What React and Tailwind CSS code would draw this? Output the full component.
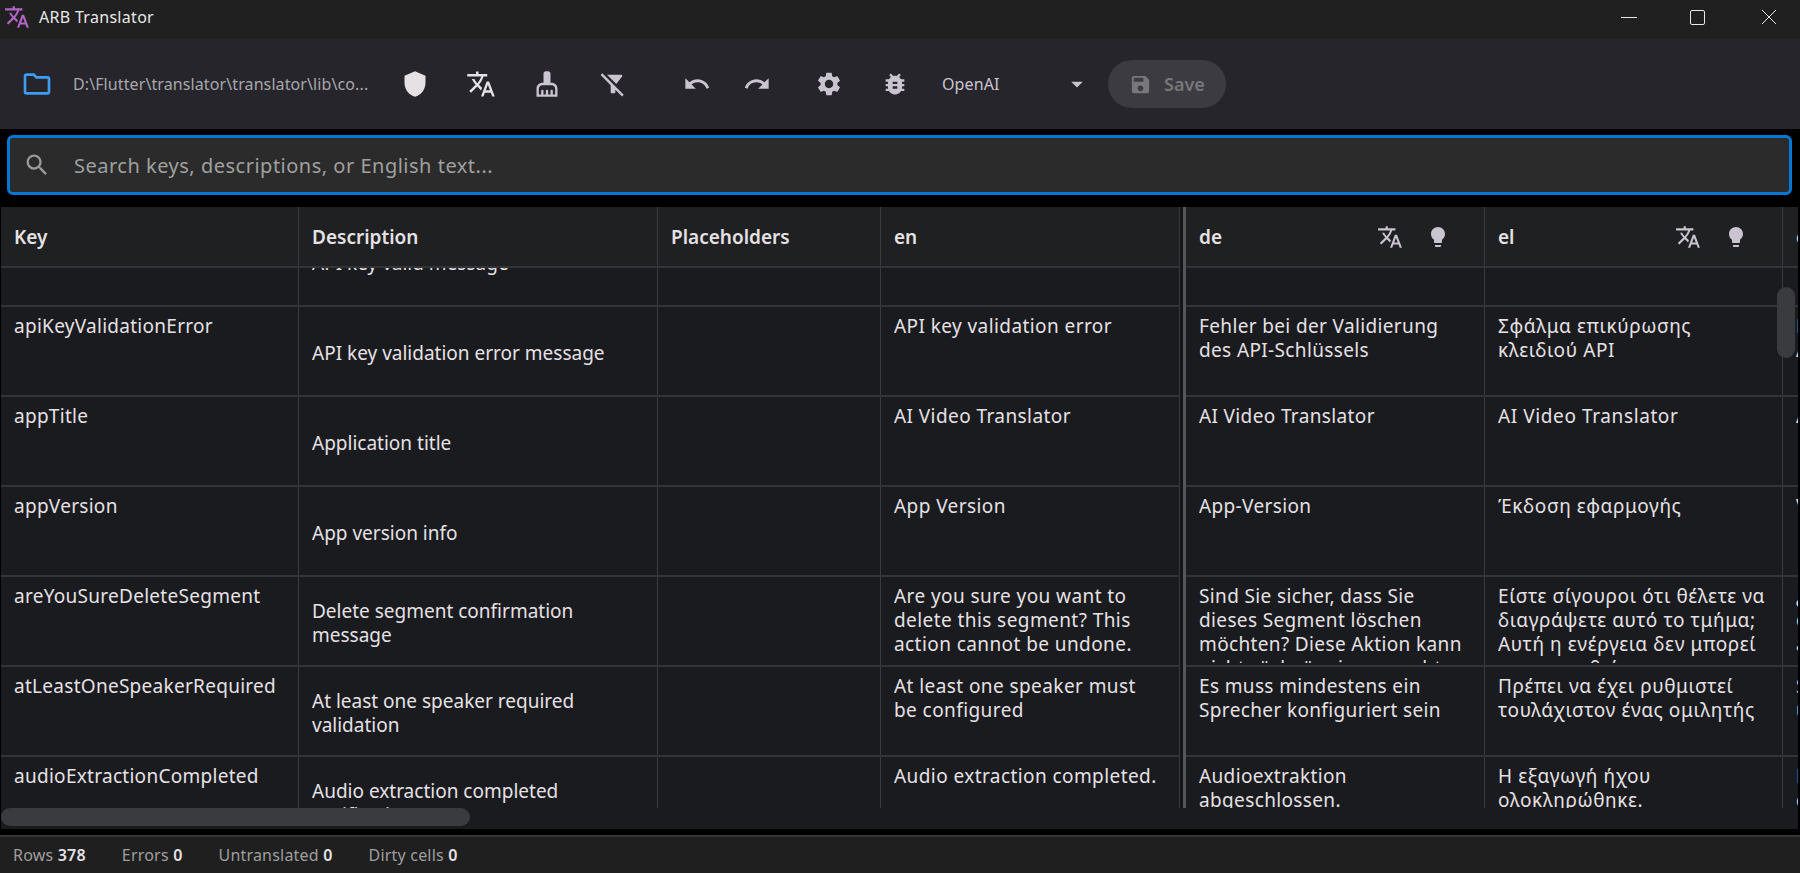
import {
  MdBugReport,
  MdArrowDropDown,
  MdCleaningServices,
  MdFilterAltOff,
  MdLightbulb,
  MdOutlineFolder,
  MdRedo,
  MdSave,
  MdSearch,
  MdSettings,
  MdShield,
  MdTranslate,
  MdUndo,
} from "react-icons/md";

const ROWS = [
  {
    key: "apiKeyValid",
    desc: "API key valid message",
    en: "API key is valid",
    de: "API-Schlüssel ist gültig",
    el: "Το κλειδί API είναι έγκυρο",
    es: "La clave de API es válida",
  },
  {
    key: "apiKeyValidationError",
    desc: "API key validation error message",
    en: "API key validation error",
    de: "Fehler bei der Validierung des API-Schlüssels",
    el: "Σφάλμα επικύρωσης κλειδιού API",
    es: "Error de validación de la clave API",
  },
  {
    key: "appTitle",
    desc: "Application title",
    en: "AI Video Translator",
    de: "AI Video Translator",
    el: "AI Video Translator",
    es: "AI Video Translator",
  },
  {
    key: "appVersion",
    desc: "App version info",
    en: "App Version",
    de: "App-Version",
    el: "Έκδοση εφαρμογής",
    es: "Versión de la aplicación",
  },
  {
    key: "areYouSureDeleteSegment",
    desc: "Delete segment confirmation message",
    en: "Are you sure you want to delete this segment? This action cannot be undone.",
    de: "Sind Sie sicher, dass Sie dieses Segment löschen möchten? Diese Aktion kann nicht rückgängig gemacht werden.",
    el: "Είστε σίγουροι ότι θέλετε να διαγράψετε αυτό το τμήμα; Αυτή η ενέργεια δεν μπορεί να αναιρεθεί.",
    es: "¿Está seguro de que desea eliminar este segmento? Esta acción no se puede deshacer.",
  },
  {
    key: "atLeastOneSpeakerRequired",
    desc: "At least one speaker required validation",
    en: "At least one speaker must be configured",
    de: "Es muss mindestens ein Sprecher konfiguriert sein",
    el: "Πρέπει να έχει ρυθμιστεί τουλάχιστον ένας ομιλητής",
    es: "Se debe configurar al menos un orador",
  },
  {
    key: "audioExtractionCompleted",
    desc: "Audio extraction completed notification",
    en: "Audio extraction completed.",
    de: "Audioextraktion abgeschlossen.",
    el: "Η εξαγωγή ήχου ολοκληρώθηκε.",
    es: "Extracción de audio completada.",
  },
];

const font = "font-['Noto_Sans',sans-serif]";

function TitleBar() {
  return (
    <div className="h-[39px] shrink-0 flex items-center pb-[5px] bg-[#202020]">
      <MdTranslate className="w-[26px] h-[26px] ml-[4px] text-[#b565c9]" />
      <span className="ml-[9px] text-[16px] tracking-[0.3px] text-[#e8e8e8]">ARB Translator</span>
      <div className="ml-auto flex items-center text-[#e8e8e8]">
        <div className="w-[16px] h-px bg-[#e8e8e8] mr-[53px]" />
        <div className="w-[15px] h-[15px] border border-[#e8e8e8] rounded-[2px] mr-[56px]" />
        <svg width="16" height="16" viewBox="0 0 16 16" className="mr-[23px]">
          <path d="M1 1 L15 15 M15 1 L1 15" stroke="#e8e8e8" strokeWidth="1" fill="none" />
        </svg>
      </div>
    </div>
  );
}

function Toolbar() {
  return (
    <div className="h-[90px] shrink-0 flex items-center bg-[#25252b]">
      <MdOutlineFolder className="w-[32px] h-[32px] ml-[21px] text-[#3f9cf3]" />
      <span className="ml-[20px] w-[300px] text-[16px] tracking-[0.1px] text-[#a8a8ac] whitespace-nowrap">
        {"D:\\Flutter\\translator\\translator\\lib\\co..."}
      </span>
      <div className="ml-[30px] flex items-center gap-[42px]">
        <MdShield className="w-[28px] h-[28px] text-[#e6e1e5] -mx-[2px]" />
        <MdTranslate className="w-[30px] h-[30px] text-[#e6e1e5] -mx-[3px]" />
        <MdCleaningServices className="w-[28px] h-[28px] text-[#cac4d0] -mx-[2px]" />
        <MdFilterAltOff className="w-[28px] h-[28px] text-[#cac4d0] -mx-[2px]" />
      </div>
      <div className="ml-[58px] flex items-center gap-[32px]">
        <MdUndo className="w-[28px] h-[28px] text-[#cac4d0]" />
        <MdRedo className="w-[28px] h-[28px] text-[#cac4d0]" />
      </div>
      <div className="ml-[44px] flex items-center gap-[38px]">
        <MdSettings className="w-[28px] h-[28px] text-[#cac4d0]" />
        <MdBugReport className="w-[28px] h-[28px] text-[#cac4d0]" />
      </div>
      <span className="ml-[33px] w-[121px] text-[16px] tracking-[0.1px] text-[#cac4d0]">OpenAI</span>
      <MdArrowDropDown className="w-[28px] h-[28px] text-[#cac4d0]" />
      <div className="ml-[17px] w-[118px] h-[48px] rounded-full bg-[#3b3b41] flex items-center pl-[21px] gap-[12px]">
        <MdSave className="w-[23px] h-[23px] text-[#77777c]" />
        <span className="text-[18px] font-semibold text-[#77777c]">Save</span>
      </div>
    </div>
  );
}

function SearchBox() {
  return (
    <div className="shrink-0 bg-black pt-[6px] pb-[12px] pl-[7px] pr-[8px]">
      <div className="h-[60px] border-[3px] border-[#0078d4] rounded-[6px] bg-[#2b2b2b] flex items-center">
        <MdSearch className="w-[28px] h-[28px] ml-[13px] text-[#9a9a9a]" />
        <span className="ml-[23px] pt-[2px] text-[20px] tracking-[0.5px] text-[#a0a0a0]">
          Search keys, descriptions, or English text...
        </span>
      </div>
    </div>
  );
}

function HeaderCell({ label, width, actions, border = "border-r border-[#3a3b3d]" }) {
  return (
    <div className={`${width} ${border} shrink-0 flex items-center pl-[13px] font-semibold text-[19px] text-[#e6e1e5]`}>
      <span className="pt-[2px]">{label}</span>
      {actions && (
        <div className="ml-auto flex items-center gap-[23px] mr-[34px]">
          <MdTranslate className="w-[26px] h-[26px] text-[#cac4d0]" />
          <MdLightbulb className="w-[24px] h-[24px] text-[#cac4d0]" />
        </div>
      )}
    </div>
  );
}

function Cell({ width, children, center, text = "tracking-[0.28px]", pad = "pr-[13px]", border = "border-r border-[#3a3b3d]" }) {
  return (
    <div className={`${width} ${border} ${pad} ${center ? "pb-[4px]" : "pb-[2px]"} shrink-0 h-full pl-[13px] pt-[7px]`}>
      <div className={`${text} h-full overflow-hidden text-[19px] leading-[24px] text-[#e6e1e5] ${center ? "flex items-center" : ""}`}>
        <div>{children}</div>
      </div>
    </div>
  );
}

// the gap and the heavy rule between the frozen columns and the language columns
function FrozenDivider() {
  return (
    <div className="w-[6px] shrink-0 -mb-[2px] flex">
      <div className="w-[3px] bg-[#141517]" />
      <div className="w-[3px] bg-[#55565a]" />
    </div>
  );
}

function Row({ row }) {
  return (
    <div className="h-[90px] flex border-b-2 border-[#333436]">
      <Cell width="w-[298px]">{row.key}</Cell>
      <Cell width="w-[359px]" text="tracking-normal" center>{row.desc}</Cell>
      <Cell width="w-[223px]" />
      <Cell width="w-[299px]" text="tracking-[0.42px]" pad="pr-[18px]">{row.en}</Cell>
      <FrozenDivider />
      <Cell width="w-[299px]" text="tracking-[0.36px]">{row.de}</Cell>
      <Cell width="w-[298px]" text="tracking-[0.6px]">{row.el}</Cell>
      <Cell width="w-[300px]" border="">{row.es}</Cell>
    </div>
  );
}

function Table() {
  return (
    <div className="relative flex-1 min-h-0 bg-[#1a1b1e] ml-px mr-[2px] flex flex-col overflow-hidden">
      <div className="h-[61px] shrink-0 flex bg-[#1f2021] border-b-2 border-[#333436]">
        <HeaderCell label="Key" width="w-[298px]" />
        <HeaderCell label="Description" width="w-[359px]" />
        <HeaderCell label="Placeholders" width="w-[223px]" />
        <HeaderCell label="en" width="w-[299px]" />
        <FrozenDivider />
        <HeaderCell label="de" width="w-[299px]" actions />
        <HeaderCell label="el" width="w-[298px]" actions />
        <HeaderCell label="es" width="w-[300px]" border="" />
      </div>
      <div className="flex-1 min-h-0 overflow-hidden">
        <div className="-mt-[51px]">
          {ROWS.map((row) => (
            <Row key={row.key} row={row} />
          ))}
        </div>
      </div>
      <div className="h-[21px] shrink-0 bg-[#1a1b1e]" />
      {/* overlay scrollbars */}
      <div className="absolute left-0 bottom-[3px] w-[469px] h-[18px] rounded-full bg-[#3a3b3f]" />
      <div className="absolute right-[3px] top-[80px] w-[18px] h-[71px] rounded-full bg-[#3a3b3f]" />
    </div>
  );
}

function Stat({ label, value }) {
  return (
    <span className="text-[#9e9e9e]">
      {label} <span className="font-semibold text-[#e6e1e5]">{value}</span>
    </span>
  );
}

function StatusBar() {
  return (
    <div className="h-[38px] shrink-0 flex items-center gap-[36px] pl-[13px] text-[16px] tracking-[0.2px] bg-[#1f1f1f] border-t-2 border-[#333436]">
      <Stat label="Rows" value="378" />
      <Stat label="Errors" value="0" />
      <Stat label="Untranslated" value="0" />
      <Stat label="Dirty cells" value="0" />
    </div>
  );
}

export default function App() {
  return (
    <div className={`h-screen flex flex-col overflow-hidden bg-black ${font}`}>
      <TitleBar />
      <Toolbar />
      <SearchBox />
      <Table />
      <div className="h-[6px] shrink-0 bg-black" />
      <StatusBar />
    </div>
  );
}
